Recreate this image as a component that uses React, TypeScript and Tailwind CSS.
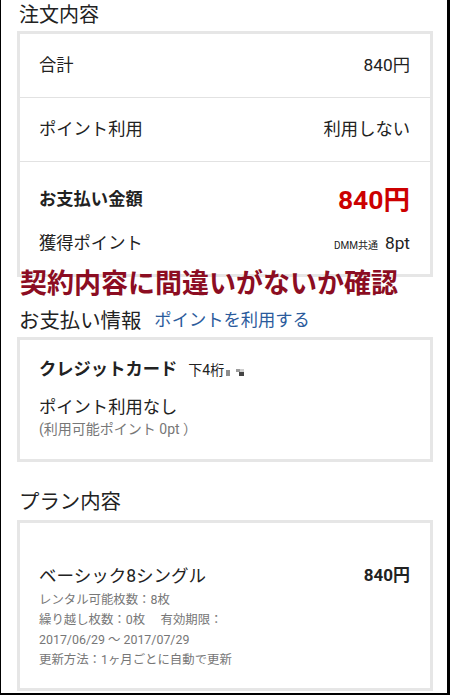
const font = { fontFamily: "Roboto, 'Noto Sans CJK JP', sans-serif" };

function Row({ label, value }: { label: string; value: string }) {
  return (
    <div className="flex h-[63px] items-center justify-between pl-[19px] pr-[20px] text-[17.3px] text-[#222]">
      <span>{label}</span>
      <span>{value}</span>
    </div>
  );
}

function Card({ children, className = "" }: { children: React.ReactNode; className?: string }) {
  return (
    <div className={"w-[416px] border-[3px] border-[#e6e6e6] bg-white " + className}>{children}</div>
  );
}

export default function App() {
  return (
    <div
      className="relative box-border h-[695px] w-[450px] overflow-hidden border-b-[2px] border-l border-r-[3px] border-black bg-white pl-[16px]"
      style={font}
    >
      {/* 注文内容 */}
      <h2 className="h-[31px] pl-[2px] text-[20px] leading-[31px] text-[#222]">注文内容</h2>
      <Card>
        <Row label="合計" value="840円" />
        <div className="h-px bg-[#e2e2e2]" />
        <Row label="ポイント利用" value="利用しない" />
        <div className="h-px bg-[#e2e2e2]" />
        <div className="pb-[16px] pl-[19px] pr-[20px] pt-[20px] text-[#222]">
          <div className="flex h-[36px] items-center justify-between">
            <span className="text-[17.3px] font-bold">お支払い金額</span>
            <span className="text-[26.5px] font-bold text-[#cc0000]">840円</span>
          </div>
          <div className="mt-[12px] flex h-[28px] items-center justify-between text-[17.3px]">
            <span>獲得ポイント</span>
            <span className="flex items-baseline">
              <span className="mr-[7px] text-[10px]">DMM共通</span>
              <span>8pt</span>
            </span>
          </div>
        </div>
      </Card>

      {/* お支払い情報 */}
      <div className="mt-[28px] flex h-[32px] items-center pl-[2px]">
        <span className="text-[20.4px] text-[#222]">お支払い情報</span>
        <span className="ml-[13px] text-[17.3px] text-[#2b5b9c]">ポイントを利用する</span>
      </div>
      <Card className="pb-[22px] pl-[19px] pt-[16px] text-[#222]">
        <div className="flex h-[28px] items-center">
          <span className="text-[17.3px] font-bold">クレジットカード</span>
          <span className="ml-[11px] text-[14px]">下4桁</span>
          <span className="ml-[2px] mt-[6px] h-[6px] w-[4px] bg-[#8e8e8e]" />
          <span className="ml-[6px] mt-[5px] flex flex-col">
            <span className="flex">
              <span className="h-[3px] w-[4px] bg-[#9c9c9c]" />
              <span className="h-[3px] w-[4px] bg-[#cfcfcf]" />
            </span>
            <span className="flex">
              <span className="h-[4px] w-[3px] bg-white" />
              <span className="h-[4px] w-[5px] bg-[#444]" />
            </span>
          </span>
        </div>
        <div className="mt-[9px] h-[28px] text-[17.3px] leading-[28px]">ポイント利用なし</div>
        <div className="h-[16px] text-[14px] leading-[16px] text-[#777]">(利用可能ポイント 0pt ）</div>
      </Card>

      {/* プラン内容 */}
      <h2 className="mt-[24px] h-[32px] pl-[2px] text-[20.4px] leading-[32px] text-[#222]">プラン内容</h2>
      <Card className="mt-[2px] pb-[18px] pl-[19px] pr-[20px] pt-[39px] text-[#222]">
        <div className="flex h-[28px] items-center justify-between">
          <span className="text-[17.5px]">ベーシック8シングル</span>
          <span className="text-[17px] font-bold">840円</span>
        </div>
        <div className="text-[12.4px] leading-[20px] text-[#777]">
          <div>レンタル可能枚数：8枚</div>
          <div>繰り越し枚数：0枚　 有効期限：</div>
          <div>2017/06/29 ～ 2017/07/29</div>
          <div>更新方法：1ヶ月ごとに自動で更新</div>
        </div>
      </Card>

      {/* annotation */}
      <div className="absolute left-[19px] top-[270px] text-[27px] font-bold leading-[28px] text-[#8c0d22]">
        契約内容に間違いがないか確認
      </div>
    </div>
  );
}
